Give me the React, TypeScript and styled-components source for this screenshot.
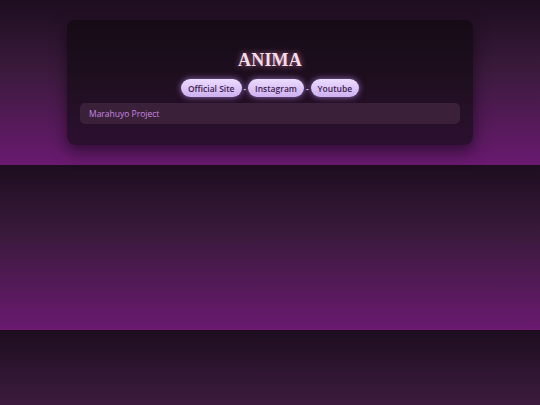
import React from 'react'
import styled, { createGlobalStyle } from 'styled-components'

const Global = createGlobalStyle`
html, body {
  margin: 0;
  padding: 0;
}
body {
  min-height: 405px;
  background: repeating-linear-gradient(180deg, #1d0d1f 0px, #3a1a3c 70px, #6a1a70 165px);
  font-family: "Open Sans", "DejaVu Sans", sans-serif;
}
`

const Page = styled.div`
  display: flex;
  justify-content: center;
  padding: 20px 0 20px;
`

const Card = styled.div`
  width: 406px;
  box-sizing: border-box;
  padding: 28px 13px 21px;
  border-radius: 8px;
  background: linear-gradient(180deg, #150b15 0%, #1f0f20 50%, #2c1030 100%);
  box-shadow: 0 6px 16px rgba(10, 0, 12, 0.55);
  display: flex;
  flex-direction: column;
  align-items: center;
`

const Title = styled.h1`
  margin: 0;
  font-family: "Liberation Serif", "DejaVu Serif", serif;
  font-weight: 700;
  font-size: 18px;
  line-height: 24px;
  letter-spacing: 0.2px;
  color: #f6dbe6;
  text-shadow: 0 0 6px rgba(255, 160, 215, 0.65);
`

const Links = styled.div`
  display: flex;
  align-items: center;
  margin-top: 7px;
`

const Pill = styled.a`
  display: flex;
  align-items: center;
  height: 18px;
  padding: 0 7px;
  border-radius: 9px;
  background: linear-gradient(180deg, #ecdcff 0%, #cdb0f0 100%);
  box-shadow: 0 0 6px rgba(200, 150, 255, 0.7);
  color: #3e1c4e;
  font-size: 8.5px;
  font-weight: 600;
  text-decoration: none;
`

const Sep = styled.span`
  color: #c9b0d8;
  font-size: 8px;
  font-weight: 700;
  margin: 0 2px;
`

const Info = styled.div`
  align-self: stretch;
  margin-top: 6px;
  height: 21px;
  display: flex;
  align-items: center;
  padding: 0 9px;
  border-radius: 5px;
  background: #3a2139;
  color: #c987e2;
  font-size: 8.5px;
  font-weight: 500;
`

const App = () => {
  return (
    <Page>
      <Global />
      <Card>
        <Title>ANIMA</Title>
        <Links>
          <Pill href="#">Official Site</Pill>
          <Sep>-</Sep>
          <Pill href="#">Instagram</Pill>
          <Sep>-</Sep>
          <Pill href="#">Youtube</Pill>
        </Links>
        <Info>Marahuyo Project</Info>
      </Card>
    </Page>
  )
}

export default App
